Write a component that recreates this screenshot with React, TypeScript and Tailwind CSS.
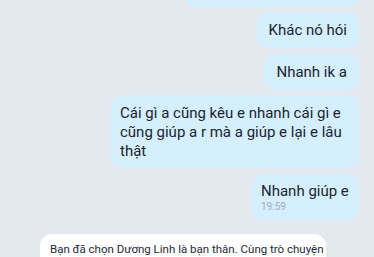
import React from "react";

const font = { fontFamily: "Roboto, 'Noto Sans', sans-serif" };

const App = () => {
  return (
    <div
      className="w-[374px] h-[257px] overflow-hidden bg-[#e3e9ef] text-[#1b2530]"
      style={font}
    >
      <div className="flex flex-col items-end pr-[15px]">
        {/* partially scrolled-off bubble */}
        <div className="w-[174px] h-[40px] mt-[-33px] rounded-[12px] bg-[#d5effe]" />

        <div className="mt-[5px] h-[36px] flex items-center rounded-[12px] bg-[#d5effe] px-3 text-[15px] leading-[19px]">
          Khác nó hói
        </div>

        <div className="mt-[6px] h-[36px] flex items-center rounded-[12px] bg-[#d5effe] px-3 text-[15px] leading-[19px]">
          Nhanh ik a
        </div>

        <div className="mt-[5px] w-[248px] rounded-[12px] bg-[#d5effe] pl-[9px] pr-2 pt-[9px] pb-[7px] text-[15px] leading-[19px]">
          Cái gì a cũng kêu e nhanh cái gì e
          <br />
          cũng giúp a r mà a giúp e lại e lâu
          <br />
          thật
        </div>

        <div className="mt-[6px] w-[108px] h-[46px] rounded-[12px] bg-[#d5effe] pl-[10px] pt-[8px]">
          <div className="text-[15px] leading-[19px]">Nhanh giúp e</div>
          <div className="text-[10px] leading-[12px] text-[#a3adb8]">19:59</div>
        </div>

        <div className="self-start ml-[40px] mt-[14px] w-[286px] rounded-[12px] bg-white px-[10px] pt-[7px] text-[11.5px] leading-[16px] text-[#1f2a36] whitespace-nowrap overflow-hidden">
          Bạn đã chọn Dương Linh là bạn thân. Cùng trò chuyện
          <br />
          và lưu giữ những khoảnh khắc đáng nhớ với Dương Linh
        </div>
      </div>
    </div>
  );
};

export default App;
